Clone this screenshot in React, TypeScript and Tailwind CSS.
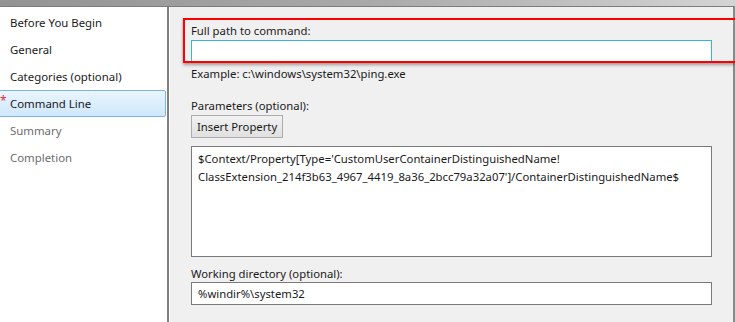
import React from "react";

const font = { fontFamily: '"Noto Sans", "Open Sans", sans-serif' };

function NavItem({ label, selected, disabled }: { label: string; selected?: boolean; disabled?: boolean }) {
  return (
    <div className="relative h-[27px] flex items-center">
      {selected && (
        <>
          <div className="absolute left-[-2px] top-[0px] w-[168px] h-[27px] rounded-[2px] border border-[#7db4e8] bg-gradient-to-b from-[#eaf5fe] to-[#cfe8fb]" />
          <span className="absolute left-[0px] top-[5px] text-[#e0303a] text-[12px] leading-none">*</span>
        </>
      )}
      <span className={"relative pl-[10px] text-[11.4px] " + (disabled ? "text-[#6d6d6d]" : "text-[#1a1a1a]")}>{label}</span>
    </div>
  );
}

export default function App() {
  return (
    <div className="w-[735px] h-[322px] flex flex-col overflow-hidden bg-white" style={font}>
      <div className="h-[7px] shrink-0 border-b border-[#7c7c7c] bg-gradient-to-r from-[#939393] via-[#a9a9a9] to-[#d4d4d4]" />
      <div className="flex flex-1 min-h-0">
        <div className="w-[169px] shrink-0 bg-white border-r-2 border-[#808080] pt-[2px] flex flex-col">
          <NavItem label="Before You Begin" />
          <NavItem label="General" />
          <NavItem label="Categories (optional)" />
          <NavItem label="Command Line" selected />
          <NavItem label="Summary" disabled />
          <NavItem label="Completion" disabled />
        </div>
        <div className="relative flex-1 overflow-hidden bg-[#f0f0f0] border-l border-[#ffffff] pl-[21px] pr-[23px] pt-[15px] text-[11.3px] text-[#1a1a1a]">
          <div className="h-[17px] leading-[17px]">Full path to command:</div>
          <div className="mt-[1px] h-[22px] bg-white border border-[#3ab2e0]" />
          <div className="mt-[3px] h-[17px] leading-[17px]">Example: c:\windows\system32\ping.exe</div>
          <div className="mt-[15px] h-[17px] leading-[17px]">Parameters (optional):</div>
          <div className="mt-[1px]">
            <button className="h-[23px] px-[5px] border border-[#adadad] bg-gradient-to-b from-[#f2f2f2] to-[#e0e0e0] text-[11.3px] text-[#1a1a1a] leading-none">Insert Property</button>
          </div>
          <div className="mt-[8px] h-[111px] bg-white border border-[#7a7a7a] px-[6px] pt-[3px] leading-[18px]">
            <div>$Context/Property[Type='CustomUserContainerDistinguishedName!</div>
            <div>ClassExtension_214f3b63_4967_4419_8a36_2bcc79a32a07']/ContainerDistinguishedName$</div>
          </div>
          <div className="mt-[8px] h-[17px] leading-[17px]">Working directory (optional):</div>
          <div className="mt-0 h-[23px] bg-white border border-[#7a7a7a] px-[6px] leading-[21px]">%windir%\system32</div>
          <div className="absolute right-0 top-0 bottom-0 w-[2px] bg-[#8a8a8a]" />
          <div className="absolute left-[13px] top-[11px] right-0 h-[45px] border-2 border-r-0 border-[#ff0000] shadow-[0_2px_3px_rgba(0,0,0,0.35)]" />
        </div>
      </div>
    </div>
  );
}
